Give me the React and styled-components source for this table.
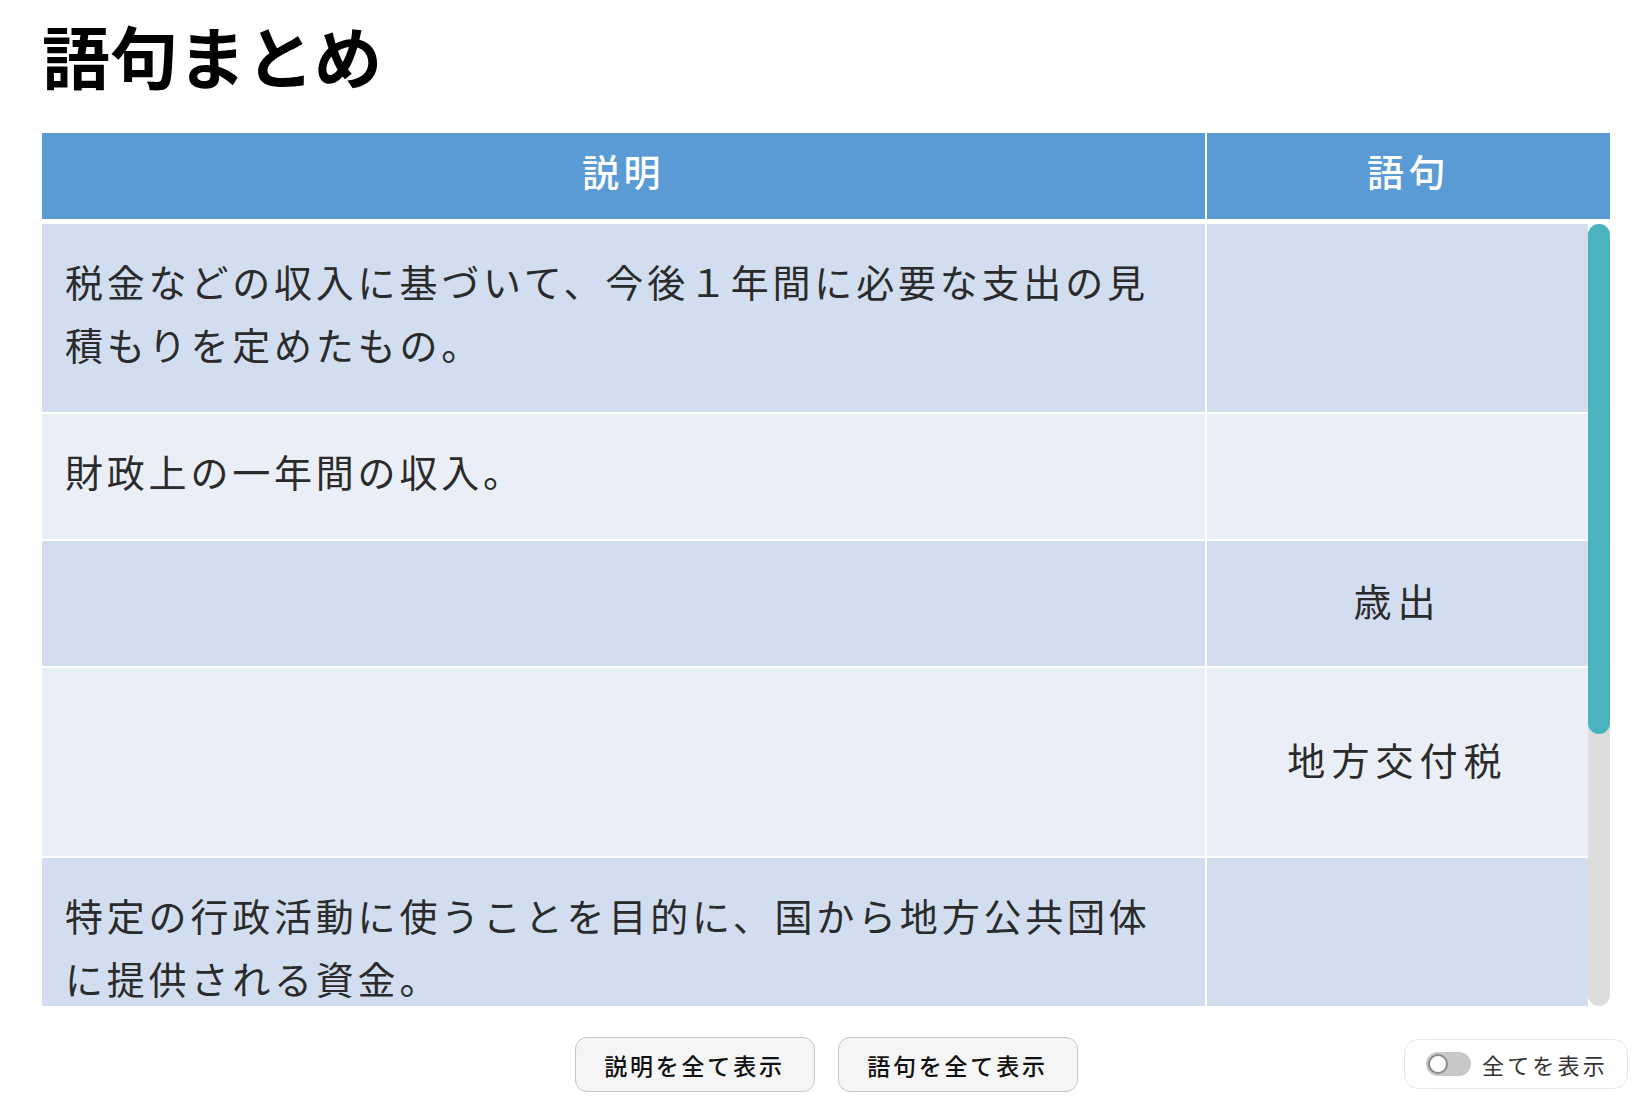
import React from "react";
import styled, { createGlobalStyle } from "styled-components";

const Global = createGlobalStyle`
  html, body { margin: 0; padding: 0; background: #fff; }
  body { font-family: "Noto Sans CJK JP", "Noto Sans", sans-serif; }
`;

const Page = styled.div`
  width: 1652px;
  height: 1106px;
  box-sizing: border-box;
  padding: 15px 42px 0;
  display: flex;
  flex-direction: column;
  overflow: hidden;
`;

const Title = styled.h1`
  margin: 0;
  font-size: 68px;
  line-height: 80px;
  font-weight: 700;
  color: #000;
`;

const Table = styled.div`
  margin-top: 38px;
  display: flex;
  flex-direction: column;
  gap: 5px;
`;

const HeaderRow = styled.div`
  display: grid;
  grid-template-columns: 1165px 1fr;
  height: 86px;
  background: #5b9bd5;
`;

const HeaderCell = styled.div`
  display: flex;
  align-items: center;
  justify-content: center;
  padding-bottom: 10px;
  box-sizing: border-box;
  color: #fff;
  font-size: 37px;
  font-weight: 500;
  letter-spacing: 0.12em;
  border-right: ${(p) => (p.$divider ? "2px solid #fff" : "none")};
`;

const Body = styled.div`
  height: 782px;
  display: flex;
  background: #fff;
`;

const Viewport = styled.div`
  flex: 1;
  overflow: hidden;
`;

const ScrollTrack = styled.div`
  width: 22px;
  flex: none;
  background: #dcdcdc;
  border-radius: 11px;
  display: flex;
  flex-direction: column;
`;

const ScrollThumb = styled.div`
  background: #4ab3bf;
  border-radius: 11px;
`;

const Row = styled.div`
  display: grid;
  grid-template-columns: 1165px 1fr;
  background: ${(p) => (p.$odd ? "#d2deef" : "#eaeff7")};
  border-bottom: 2px solid #fff;
`;

const DescWrap = styled.div`
  border-right: 2px solid #fff;
`;

const DescText = styled.div`
  padding: 25px 23px 37px;
  font-size: 38px;
  line-height: 63px;
  letter-spacing: 0.1em;
  color: #2b2b2b;
  visibility: ${(p) => (p.$hidden ? "hidden" : "visible")};
`;

const TermCell = styled.div`
  display: flex;
  align-items: center;
  justify-content: center;
  padding-bottom: 8px;
  font-size: 38px;
  letter-spacing: 0.16em;
  color: #2b2b2b;
  visibility: ${(p) => (p.$hidden ? "hidden" : "visible")};
`;

const Footer = styled.div`
  display: grid;
  grid-template-columns: 1fr auto 1fr;
  align-items: start;
  padding-top: 31px;
`;

const Buttons = styled.div`
  grid-column: 2;
  display: flex;
  gap: 23px;
`;

const Button = styled.button`
  width: 240px;
  height: 55px;
  box-sizing: border-box;
  border: 1.5px solid #c6c6c6;
  border-radius: 12px;
  background: #f5f5f5;
  font-family: "Noto Sans CJK JP", sans-serif;
  font-size: 23px;
  font-weight: 500;
  letter-spacing: 0.12em;
  color: #111;
  padding: 0;
  cursor: pointer;
`;

const ToggleBox = styled.label`
  grid-column: 3;
  justify-self: end;
  margin-right: -18px;
  margin-top: 2px;
  width: 224px;
  height: 50px;
  box-sizing: border-box;
  border: 1.5px solid #dde7f5;
  border-radius: 14px;
  background: #fff;
  display: flex;
  align-items: center;
  gap: 11px;
  padding-left: 21px;
  font-size: 22px;
  letter-spacing: 0.15em;
  color: #333;
`;

const Switch = styled.span`
  width: 45px;
  height: 24px;
  border-radius: 12px;
  background: #c8c8c8;
  display: flex;
  align-items: center;
  padding: 0 2px;
  box-sizing: border-box;
`;

const Knob = styled.span`
  width: 20px;
  height: 20px;
  border-radius: 50%;
  background: #fff;
  box-sizing: border-box;
  border: 2px solid #8a8a8a;
`;

const rows = [
  { desc: "税金などの収入に基づいて、今後１年間に必要な支出の見積もりを定めたもの。", term: "予算", showDesc: true, showTerm: false },
  { desc: "財政上の一年間の収入。", term: "歳入", showDesc: true, showTerm: false },
  { desc: "財政上の一年間の支出。", term: "歳出", showDesc: false, showTerm: true },
  { desc: "地方公共団体間の財政の格差をなくすために、国から配分される資金。", term: "地方交付税", showDesc: false, showTerm: true },
  { desc: "特定の行政活動に使うことを目的に、国から地方公共団体に提供される資金。", term: "国庫支出金", showDesc: true, showTerm: false },
  { desc: "地方公共団体が独自に集める税。", term: "地方税", showDesc: false, showTerm: false },
  { desc: "地方公共団体の借金。", term: "地方債", showDesc: false, showTerm: false },
  { desc: "国が発行する債券。", term: "国債", showDesc: false, showTerm: false },
];

export default function App() {
  return (
    <>
      <Global />
      <Page>
        <Title>語句まとめ</Title>
        <Table>
          <HeaderRow>
            <HeaderCell $divider>説明</HeaderCell>
            <HeaderCell>語句</HeaderCell>
          </HeaderRow>
          <Body>
            <Viewport>
              {rows.map((r, i) => (
                <Row key={i} $odd={i % 2 === 0}>
                  <DescWrap>
                    <DescText $hidden={!r.showDesc}>{r.desc}</DescText>
                  </DescWrap>
                  <TermCell $hidden={!r.showTerm}>{r.term}</TermCell>
                </Row>
              ))}
            </Viewport>
            <ScrollTrack>
              <ScrollThumb style={{ height: 510 }} />
            </ScrollTrack>
          </Body>
        </Table>
        <Footer>
          <Buttons>
            <Button>説明を全て表示</Button>
            <Button>語句を全て表示</Button>
          </Buttons>
          <ToggleBox>
            <Switch>
              <Knob />
            </Switch>
            全てを表示
          </ToggleBox>
        </Footer>
      </Page>
    </>
  );
}
